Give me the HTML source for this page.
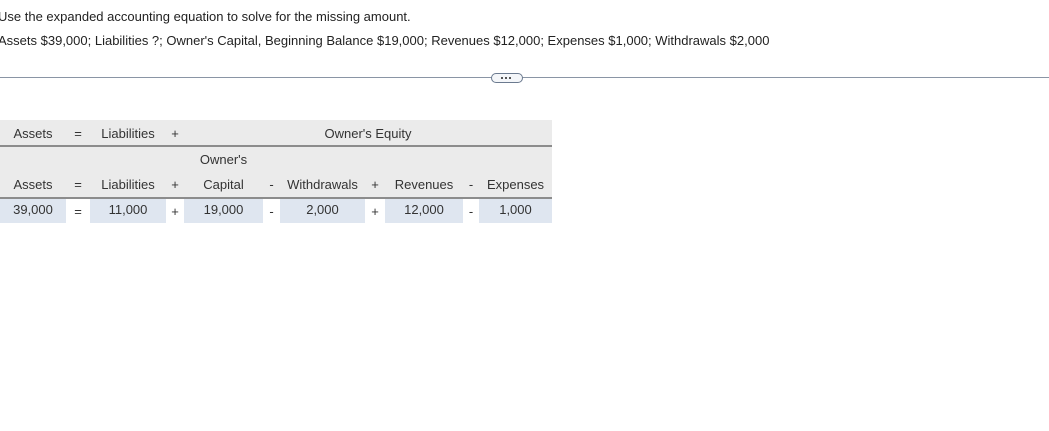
<!DOCTYPE html>
<html><head><style>
body{margin:0;width:1049px;height:431px;background:#fff;font-family:"Liberation Sans",Arial,sans-serif;font-size:13px;color:#222;position:relative;overflow:hidden}
.t{position:absolute;white-space:nowrap}
.c{position:absolute;text-align:center;color:#333;white-space:nowrap}
</style></head><body>
<div class="t" style="left:-2px;top:9px">Use the expanded accounting equation to solve for the missing amount.</div>
<div class="t" style="left:-2px;top:33px">Assets $39,000; Liabilities ?; Owner's Capital, Beginning Balance $19,000; Revenues $12,000; Expenses $1,000; Withdrawals $2,000</div>
<div style="position:absolute;left:0;top:77px;width:1049px;height:1px;background:#8a95a5"></div>
<div style="position:absolute;left:491px;top:73px;width:30px;height:8px;border:1px solid #6b7a8f;border-radius:5px;background:#f4f6f9"></div>
<div style="position:absolute;left:501px;top:77px;width:2px;height:2px;background:#555"></div>
<div style="position:absolute;left:505px;top:77px;width:2px;height:2px;background:#555"></div>
<div style="position:absolute;left:509px;top:77px;width:2px;height:2px;background:#555"></div>

<div style="position:absolute;left:0;top:120px;width:552px;height:25px;background:#ebebeb"></div>
<div style="position:absolute;left:0;top:145px;width:552px;height:2px;background:#8c8c8c"></div>
<div style="position:absolute;left:0;top:147px;width:552px;height:50px;background:#ebebeb"></div>
<div style="position:absolute;left:0;top:197px;width:552px;height:2px;background:#8c8c8c"></div>

<div class="c" style="left:0;width:66px;top:126px">Assets</div>
<div class="c" style="left:66px;width:24px;top:126px">=</div>
<div class="c" style="left:90px;width:76px;top:126px">Liabilities</div>
<div class="c" style="left:166px;width:18px;top:126px">+</div>
<div class="c" style="left:184px;width:368px;top:126px">Owner's Equity</div>

<div class="c" style="left:184px;width:79px;top:152px">Owner's</div>

<div class="c" style="left:0;width:66px;top:177px">Assets</div>
<div class="c" style="left:66px;width:24px;top:177px">=</div>
<div class="c" style="left:90px;width:76px;top:177px">Liabilities</div>
<div class="c" style="left:166px;width:18px;top:177px">+</div>
<div class="c" style="left:184px;width:79px;top:177px">Capital</div>
<div class="c" style="left:263px;width:17px;top:177px">-</div>
<div class="c" style="left:280px;width:85px;top:177px">Withdrawals</div>
<div class="c" style="left:365px;width:20px;top:177px">+</div>
<div class="c" style="left:385px;width:78px;top:177px">Revenues</div>
<div class="c" style="left:463px;width:16px;top:177px">-</div>
<div class="c" style="left:479px;width:73px;top:177px">Expenses</div>

<div class="c" style="left:0;width:66px;top:199px;height:24px;line-height:22px;background:#dfe6f0">39,000</div>
<div class="c" style="left:66px;width:24px;top:199px;height:24px;line-height:26px">=</div>
<div class="c" style="left:90px;width:76px;top:199px;height:24px;line-height:22px;background:#dfe6f0">11,000</div>
<div class="c" style="left:166px;width:18px;top:199px;height:24px;line-height:26px">+</div>
<div class="c" style="left:184px;width:79px;top:199px;height:24px;line-height:22px;background:#dfe6f0">19,000</div>
<div class="c" style="left:263px;width:17px;top:199px;height:24px;line-height:26px">-</div>
<div class="c" style="left:280px;width:85px;top:199px;height:24px;line-height:22px;background:#dfe6f0">2,000</div>
<div class="c" style="left:365px;width:20px;top:199px;height:24px;line-height:26px">+</div>
<div class="c" style="left:385px;width:78px;top:199px;height:24px;line-height:22px;background:#dfe6f0">12,000</div>
<div class="c" style="left:463px;width:16px;top:199px;height:24px;line-height:26px">-</div>
<div class="c" style="left:479px;width:73px;top:199px;height:24px;line-height:22px;background:#dfe6f0">1,000</div>
</body></html>
